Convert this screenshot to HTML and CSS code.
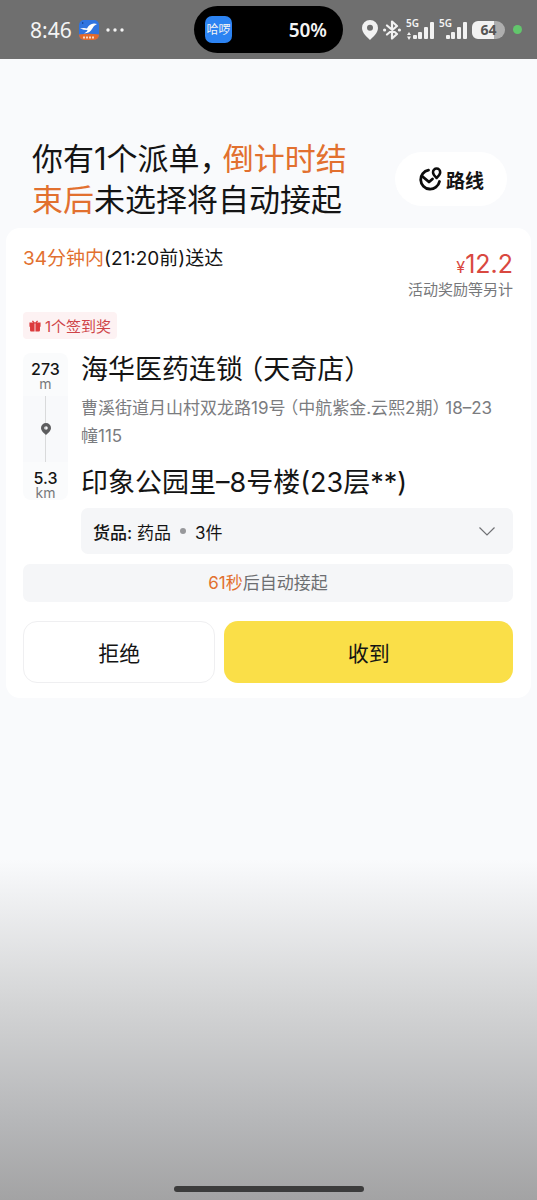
FILE: index.html
```html
<!DOCTYPE html>
<html lang="zh-CN">
<head>
<meta charset="utf-8">
<meta name="viewport" content="width=device-width, initial-scale=1">
<title>派单</title>
<link rel="stylesheet" href="styles.css">
</head>
<body>
<div class="status">
  <div class="status-left">
    <span class="clock">8:46</span>
    <svg class="app-badge" viewBox="0 0 20 20" aria-hidden="true">
      <defs><clipPath id="badge"><rect width="20" height="20" rx="5"/></clipPath></defs>
      <g clip-path="url(#badge)">
        <rect width="20" height="20" fill="#2f74e0"/>
        <path d="M0 14.500Q10 13 20 14.500V20H0Z" fill="#e2692b"/>
        <path d="M1 8.500Q5 7.500 8 8.500Q10 4 15 3.500L18 4Q14.500 5.500 13 9Q11 13 5 13.500Q8.500 11.500 8.500 10Q5 10 1 8.500Z" fill="#fff"/>
        <path d="M4 17.500H16" stroke="#f8d9c6" stroke-width="2" stroke-dasharray="2 1"/>
        <path d="M3 2L5 3L3 4Z" fill="#153f8c"/>
      </g>
    </svg>
    <svg class="more" viewBox="0 0 18 4" fill="#f4f4f4" aria-hidden="true"><circle cx="2" cy="2" r="1.700"/><circle cx="9" cy="2" r="1.700"/><circle cx="16" cy="2" r="1.700"/></svg>
  </div>
  <div class="island">
    <span class="hello">哈啰</span>
    <span class="percent">50%</span>
  </div>
  <div class="status-right">
    <svg class="pin" viewBox="0 0 16 20" aria-hidden="true"><path fill="#f2f2f2" fill-rule="evenodd" d="M8 0A8 8 0 0 0 0 8C0 13 5 17 8 20C11 17 16 13 16 8A8 8 0 0 0 8 0ZM8 4.800A3 3 0 1 1 8 10.800A3 3 0 1 1 8 4.800Z"/></svg>
    <svg class="bluetooth" viewBox="0 0 18 20" aria-hidden="true"><path d="M4 5.500L14 14L9 18.500V1.500L14 6L4 14.500" fill="none" stroke="#f2f2f2" stroke-width="2.200" stroke-linejoin="round" stroke-linecap="round"/><circle cx="1.600" cy="10" r="1.600" fill="#f2f2f2"/><circle cx="16.400" cy="10" r="1.600" fill="#f2f2f2"/></svg>
    <span class="signal"><span class="net">5G</span><svg viewBox="0 0 28 20" fill="#f2f2f2" aria-hidden="true"><path d="M3 12L5 15H1ZM3 20L1 16.500H5Z"/><rect x="7" y="15" width="4" height="4" rx="1"/><rect x="12" y="12" width="4" height="7" rx="1"/><rect x="18" y="7" width="4" height="12" rx="1"/><rect x="24" y="2" width="4" height="17" rx="1"/></svg></span>
    <span class="signal"><span class="net">5G</span><svg viewBox="0 0 28 20" fill="#f2f2f2" aria-hidden="true"><rect x="7" y="15" width="4" height="4" rx="1"/><rect x="12" y="12" width="4" height="7" rx="1"/><rect x="18" y="7" width="4" height="12" rx="1"/><rect x="24" y="2" width="4" height="17" rx="1"/></svg></span>
    <span class="battery">64</span>
    <span class="live"></span>
  </div>
</div>

<main class="page">
  <header class="head">
    <h1 class="title">你有1个派单<span class="close">，</span><em class="hot">倒计时结束后</em>未选择将自动接起</h1>
    <button class="route" type="button">
      <svg viewBox="0 0 24 24" fill="none" stroke="#0c0c0c" stroke-width="2.800" stroke-linecap="round" stroke-linejoin="round" aria-hidden="true">
        <path d="M10.500 3.200A9.500 9.500 0 1 0 21.500 14.500"/>
        <path d="M4.500 9.500L11 15L14.500 12"/>
        <path d="M18.600 1.600A3.600 3.600 0 0 0 15 5.200C15 7.600 17 9.400 18.600 11C20.200 9.400 22.200 7.600 22.200 5.200A3.600 3.600 0 0 0 18.600 1.600Z" stroke-width="2.500"/>
      </svg>
      路线
    </button>
  </header>

  <section class="card">
    <div class="summary">
      <p class="deadline"><em class="hot">34分钟内</em>(21:20前)送达</p>
      <div class="fee">
        <p class="price"><span class="yen">¥</span>12.2</p>
        <p class="extra">活动奖励等另计</p>
      </div>
    </div>

    <p class="tag">
      <svg viewBox="0 0 14 14" fill="#dc3a3c" aria-hidden="true"><path d="M0.500 3H6.500V8H0.500ZM7.500 3H13.500V8H7.500ZM1.200 8H6.500V13.500H2.500Q1.200 13.500 1.200 12ZM7.500 8H12.800V12Q12.800 13.500 11.500 13.500H7.500Z"/><path d="M6.500 4L4 1M7.500 4L10 1" fill="none" stroke="#dc3a3c" stroke-width="1.500"/></svg>
      1个签到奖
    </p>

    <div class="trip">
      <div class="rail">
        <p class="dist"><b>273</b><span>m</span></p>
        <div class="track">
          <svg viewBox="0 0 10 12" aria-hidden="true"><path fill="#5d5d5f" fill-rule="evenodd" d="M5 0A5 5 0 0 0 0 5C0 8 3 10 5 12C7 10 10 8 10 5A5 5 0 0 0 5 0ZM5 3.200A1.800 1.800 0 1 1 5 6.800A1.800 1.800 0 1 1 5 3.200Z"/></svg>
        </div>
        <p class="dist"><b>5.3</b><span>km</span></p>
      </div>
      <div class="stops">
        <h2 class="place">海华医药连锁<span class="open">（</span>天奇店<span class="close">）</span></h2>
        <p class="address">曹溪街道月山村双龙路19号<span class="open">（</span>中航紫金.云熙2期<span class="close">）</span>18–23幢115</p>
        <h2 class="place">印象公园里–8号楼(23层**)</h2>
      </div>
    </div>

    <button class="goods" type="button">
      <span><b>货品:</b> 药品</span><i class="dot"></i><span>3件</span>
      <svg viewBox="0 0 16 9" fill="none" stroke="#707175" stroke-width="1.200" aria-hidden="true"><path d="M0.500 0.500L8 8L15.500 0.500"/></svg>
    </button>

    <p class="countdown"><em class="hot">61秒</em>后自动接起</p>

    <div class="actions">
      <button class="reject" type="button">拒绝</button>
      <button class="accept" type="button">收到</button>
    </div>
  </section>
</main>
<div class="home"></div>
</body>
</html>
```

FILE: styles.css
```css
* {
  box-sizing: border-box;
  margin: 0;
  padding: 0;
}

body {
  min-height: 100vh;
  display: flex;
  flex-direction: column;
  background: linear-gradient(#f9fafc 0, #f9fafc 860px, #d3d4d5 1005px, #b6b7b9 1120px, #a3a3a4 1200px);
  font-family: Inter, "Noto Sans CJK SC", sans-serif;
  color: #141414;
}

button {
  border: 0;
  font: inherit;
  color: inherit;
  cursor: pointer;
}

em, i {
  font-style: normal;
}

.hot {
  color: #e2702f;
}

.open, .close {
  font-family: "Noto Sans CJK SC", sans-serif;
  font-feature-settings: "halt";
  line-height: 1;
}

.open {
  margin-left: 0.25em;
}

.close {
  margin-right: 0.25em;
}

.status {
  height: 59px;
  display: grid;
  grid-template-columns: 1fr 149px 1fr;
  align-items: center;
  background: #6f6f6f;
  color: #f4f4f4;
}

.status-left {
  display: flex;
  align-items: center;
  gap: 7px;
  padding-left: 30px;
}

.clock {
  font-family: "Noto Sans", sans-serif;
  font-size: 21px;
}

.app-badge {
  width: 20px;
  height: 20px;
}

.more {
  width: 18px;
  height: 4px;
}

.island {
  height: 47px;
  display: flex;
  align-items: center;
  justify-content: space-between;
  padding: 0 16px 0 11px;
  border-radius: 24px;
  background: #000;
}

.hello {
  width: 27px;
  height: 27px;
  border-radius: 7px;
  background: #2c83f2;
  font-size: 12px;
  line-height: 27px;
  text-align: center;
  white-space: nowrap;
}

.percent {
  font-family: "Noto Sans", sans-serif;
  font-size: 19px;
  font-weight: 600;
}

.status-right {
  display: flex;
  align-items: center;
  justify-content: flex-end;
  gap: 5px;
  padding-right: 15px;
}

.pin {
  width: 16px;
  height: 20px;
}

.bluetooth {
  width: 18px;
  height: 20px;
}

.signal {
  position: relative;
  width: 28px;
  height: 20px;
}

.signal svg {
  display: block;
  width: 28px;
  height: 20px;
}

.net {
  position: absolute;
  left: 0;
  top: -3px;
  font-family: "Noto Sans", sans-serif;
  font-size: 10px;
  font-weight: 600;
  line-height: 12px;
}

.battery {
  width: 33px;
  height: 18px;
  border-radius: 6px 9px 9px 6px;
  background: linear-gradient(90deg, #f2f2f2 66%, #aeaeae 66%);
  color: #555;
  font-family: "Noto Sans", sans-serif;
  font-size: 14px;
  font-weight: 700;
  line-height: 18px;
  text-align: center;
}

.live {
  width: 9px;
  height: 9px;
  margin-left: 3px;
  border-radius: 50%;
  background: #62c66c;
}

.page {
  flex: 1;
  padding: 79px 6px 0;
}

.head {
  display: flex;
  align-items: center;
  justify-content: space-between;
  padding: 0 24px 8px 26px;
}

.title {
  width: 320px;
  font-size: 31px;
  font-weight: 400;
  line-height: 41px;
}

.route {
  display: flex;
  align-items: center;
  gap: 4px;
  height: 54px;
  padding: 0 23px;
  border-radius: 27px;
  background: #fff;
  font-size: 19px;
  font-weight: 700;
  white-space: nowrap;
}

.route svg {
  width: 24px;
  height: 24px;
}

.card {
  padding: 17px 18px 15px 17px;
  border-radius: 14px;
  background: #fff;
}

.summary {
  display: flex;
  justify-content: space-between;
}

.deadline {
  font-size: 19px;
  line-height: 28px;
}

.fee {
  padding-top: 5px;
  text-align: right;
}

.price {
  color: #d94840;
  font-size: 25px;
  line-height: 28px;
}

.yen {
  font-size: 16px;
  line-height: 1;
}

.extra {
  color: #77787b;
  font-size: 15px;
  line-height: 24px;
}

.tag {
  display: flex;
  align-items: center;
  gap: 4px;
  width: fit-content;
  height: 27px;
  margin-top: 10px;
  padding: 0 6px;
  border-radius: 4px;
  background: #fdf2f3;
  color: #cf4448;
  font-size: 15px;
}

.tag svg {
  width: 12px;
  height: 14px;
}

.trip {
  display: grid;
  grid-template-columns: 45px 1fr;
  gap: 13px;
  margin-top: 14px;
}

.rail {
  display: flex;
  flex-direction: column;
  padding-top: 8px;
  border-radius: 8px;
  background: #fafbfc;
}

.dist {
  display: flex;
  flex-direction: column;
  align-items: center;
  font-size: 14px;
  line-height: 14px;
}

.dist b {
  font-size: 16px;
  font-weight: 500;
  line-height: 16px;
}

.dist span {
  color: #77787b;
}

.track {
  flex: 1;
  display: grid;
  place-items: center;
  margin: 5px 0 8px;
  background: linear-gradient(#d9dadb, #d9dadb) center / 1px 100% no-repeat #f8f9fb;
}

.track svg {
  width: 10px;
  height: 12px;
}

.place {
  font-size: 27px;
  font-weight: 400;
  line-height: 34px;
}

.address {
  padding: 7px 12px 16px 0;
  color: #7b7c7f;
  font-size: 17px;
  line-height: 28px;
}

.goods {
  display: flex;
  align-items: center;
  gap: 9px;
  width: calc(100% - 58px);
  height: 46px;
  margin: 8px 0 0 58px;
  padding: 0 18px 0 12px;
  border-radius: 7px;
  background: #f5f6f8;
  font-size: 17px;
}

.goods b {
  font-weight: 500;
}

.dot {
  width: 6px;
  height: 6px;
  border-radius: 50%;
  background: #97989b;
}

.goods svg {
  width: 16px;
  height: 9px;
  margin-left: auto;
}

.countdown {
  margin-top: 10px;
  border-radius: 7px;
  background: #f5f6f8;
  color: #6d6e71;
  font-size: 17px;
  line-height: 38px;
  text-align: center;
}

.actions {
  display: grid;
  grid-template-columns: 2fr 3fr;
  gap: 9px;
  margin-top: 19px;
}

.reject, .accept {
  height: 62px;
  border-radius: 14px;
  font-size: 21px;
}

.reject {
  border: 1px solid #efeff1;
  background: #fff;
}

.accept {
  background: #fadf48;
}

.home {
  align-self: center;
  width: 190px;
  height: 6px;
  margin-bottom: 8px;
  border-radius: 3px;
  background: #3c3c3c;
}
```
